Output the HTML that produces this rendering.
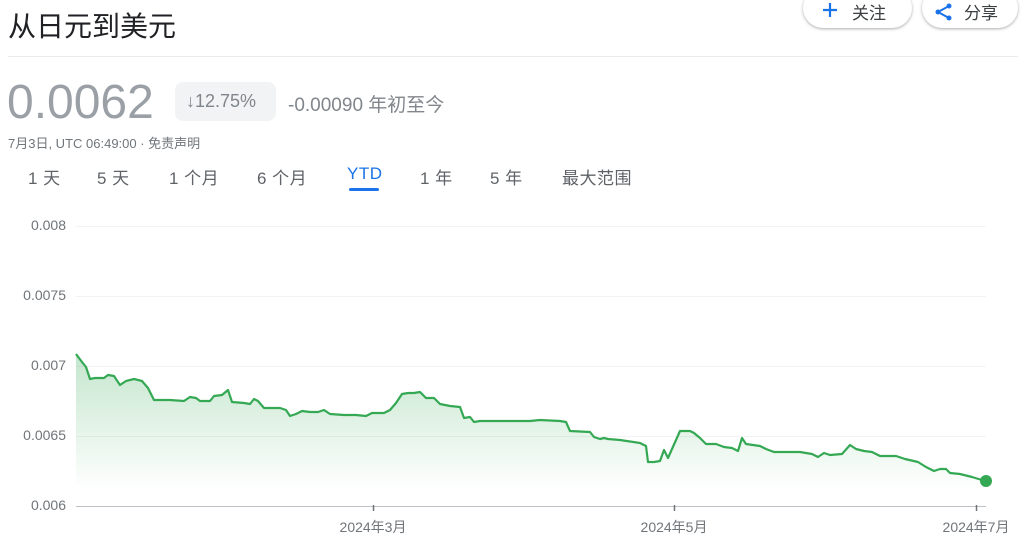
<!DOCTYPE html>
<html><head><meta charset="utf-8"><style>
html,body{margin:0;padding:0;background:#fff;width:1024px;height:547px;overflow:hidden;font-family:"Liberation Sans","Noto Sans CJK SC",sans-serif;}
.a{position:absolute;white-space:nowrap}
.btn{position:absolute;top:-12px;height:40px;border-radius:20px;background:#fff;box-shadow:0 1px 3px rgba(60,64,67,.3),0 1px 2px rgba(60,64,67,.15);font-size:17px;color:#3c4043;}
.tab{position:absolute;top:164px;font-size:17px;color:#5f6368;letter-spacing:.5px}
.yl{position:absolute;right:958px;font-size:14px;color:#70757a}
</style></head><body>
<div class="a" style="left:8px;top:5px;font-size:28px;color:#202124">从日元到美元</div>
<div class="btn" style="left:803px;width:109px"><svg class="a" style="left:19px;top:14px" width="16" height="16" viewBox="0 0 16 16"><path d="M8 1V15M1 8H15" stroke="#1a73e8" stroke-width="2.2"/></svg><span class="a" style="left:49px;top:11px">关注</span></div>
<div class="btn" style="left:922px;width:96px"><svg class="a" style="left:12px;top:14px" width="20" height="20" viewBox="0 0 20 20"><circle cx="15" cy="4" r="2.5" fill="#1a73e8"/><circle cx="4" cy="10" r="2.5" fill="#1a73e8"/><circle cx="15" cy="16" r="2.5" fill="#1a73e8"/><path d="M15 4L4 10L15 16" stroke="#1a73e8" stroke-width="2" fill="none"/></svg><span class="a" style="left:42px;top:11px">分享</span></div>
<div class="a" style="left:8px;top:56px;width:1010px;height:1px;background:#e8eaed"></div>
<div class="a" style="left:7px;top:76px;font-size:48px;color:#9aa0a6;line-height:54px">0.0062</div>
<div class="a" style="left:175px;top:82px;width:101px;height:39px;background:#f1f3f4;border-radius:8px"></div>
<div class="a" style="left:186px;top:91px;font-size:18px;color:#80868b">↓12.75%</div>
<div class="a" style="left:288px;top:90px;font-size:19px;color:#80868b">-0.00090 年初至今</div>
<div class="a" style="left:8px;top:133px;font-size:13px;color:#70757a">7月3日, UTC 06:49:00 · 免责声明</div>
<div class="tab" style="left:28px">1 天</div>
<div class="tab" style="left:97px">5 天</div>
<div class="tab" style="left:169px">1 个月</div>
<div class="tab" style="left:257px">6 个月</div>
<div class="tab" style="left:347px;color:#1a73e8">YTD</div>
<div class="a" style="left:349px;top:188px;width:30px;height:3px;background:#1a73e8;border-radius:2px"></div>
<div class="tab" style="left:420px">1 年</div>
<div class="tab" style="left:490px">5 年</div>
<div class="tab" style="left:562px">最大范围</div>
<div class="yl" style="top:217px">0.008</div>
<div class="yl" style="top:287px">0.0075</div>
<div class="yl" style="top:357px">0.007</div>
<div class="yl" style="top:427px">0.0065</div>
<div class="yl" style="top:497px">0.006</div>
<svg class="a" style="left:0;top:0" width="1024" height="547">
<defs><linearGradient id="g" x1="0" y1="350" x2="0" y2="490" gradientUnits="userSpaceOnUse"><stop offset="0" stop-color="#34a853" stop-opacity=".3"/><stop offset="1" stop-color="#34a853" stop-opacity="0"/></linearGradient></defs>
<g stroke="#f1f3f4" stroke-width="1"><line x1="76" y1="226.5" x2="986" y2="226.5"/><line x1="76" y1="296.5" x2="986" y2="296.5"/><line x1="76" y1="366.5" x2="986" y2="366.5"/><line x1="76" y1="436.5" x2="986" y2="436.5"/></g>
<line x1="76" y1="506.5" x2="986" y2="506.5" stroke="#bdc1c6"/>
<g stroke="#70757a" stroke-width="1.5"><line x1="373.5" y1="505" x2="373.5" y2="511"/><line x1="674.5" y1="505" x2="674.5" y2="511"/><line x1="976.5" y1="505" x2="976.5" y2="511"/></g>
<path fill="url(#g)" d="M76,354 L82,362 L86,367 L90,379 L95,378 L104,378 L108,375 L114,376 L120,385 L126,381 L134,379 L142,381 L148,388 L154,400 L170,400 L184,401 L190,397 L196,398 L200,401 L210,401 L214,396 L222,395 L228,390 L232,402 L244,403 L250,404 L254,399 L258,401 L264,408 L280,408 L286,410 L290,416 L296,414 L302,411 L310,412 L318,412 L324,410 L330,414 L344,415 L356,415 L366,416 L372,413 L384,413 L390,410 L396,403 L402,394 L408,393 L414,393 L420,392 L426,398 L434,398 L440,404 L450,406 L460,407 L464,418 L470,417 L474,422 L480,421 L500,421 L514,421 L530,421 L540,420 L560,421 L566,422 L570,431 L590,432 L594,437 L600,439 L604,438 L608,439 L620,440 L640,443 L646,446 L648,462 L654,462 L660,461 L664,450 L668,458 L680,431 L690,431 L694,433 L700,438 L706,444 L716,444 L724,447 L732,448 L738,451 L742,438 L746,444 L760,446 L766,449 L774,452 L790,452 L800,452 L812,454 L818,457 L824,453 L830,455 L842,454 L850,445 L856,449 L864,451 L872,452 L880,456 L896,456 L905,459 L918,462 L926,467 L934,471 L940,469 L946,469 L950,473 L960,474 L972,477 L982,480 L986,481 L986,506 L76,506 Z"/>
<path fill="none" stroke="#34a853" stroke-width="2.2" stroke-linejoin="round" d="M76,354 L82,362 L86,367 L90,379 L95,378 L104,378 L108,375 L114,376 L120,385 L126,381 L134,379 L142,381 L148,388 L154,400 L170,400 L184,401 L190,397 L196,398 L200,401 L210,401 L214,396 L222,395 L228,390 L232,402 L244,403 L250,404 L254,399 L258,401 L264,408 L280,408 L286,410 L290,416 L296,414 L302,411 L310,412 L318,412 L324,410 L330,414 L344,415 L356,415 L366,416 L372,413 L384,413 L390,410 L396,403 L402,394 L408,393 L414,393 L420,392 L426,398 L434,398 L440,404 L450,406 L460,407 L464,418 L470,417 L474,422 L480,421 L500,421 L514,421 L530,421 L540,420 L560,421 L566,422 L570,431 L590,432 L594,437 L600,439 L604,438 L608,439 L620,440 L640,443 L646,446 L648,462 L654,462 L660,461 L664,450 L668,458 L680,431 L690,431 L694,433 L700,438 L706,444 L716,444 L724,447 L732,448 L738,451 L742,438 L746,444 L760,446 L766,449 L774,452 L790,452 L800,452 L812,454 L818,457 L824,453 L830,455 L842,454 L850,445 L856,449 L864,451 L872,452 L880,456 L896,456 L905,459 L918,462 L926,467 L934,471 L940,469 L946,469 L950,473 L960,474 L972,477 L982,480 L986,481"/>
<circle cx="986" cy="481" r="6" fill="#34a853"/>
<g font-family="Liberation Sans,Noto Sans CJK SC,sans-serif" font-size="14" fill="#70757a" text-anchor="middle"><text x="373" y="532">2024年3月</text><text x="674" y="532">2024年5月</text><text x="976" y="532">2024年7月</text></g>
</svg>
</body></html>
